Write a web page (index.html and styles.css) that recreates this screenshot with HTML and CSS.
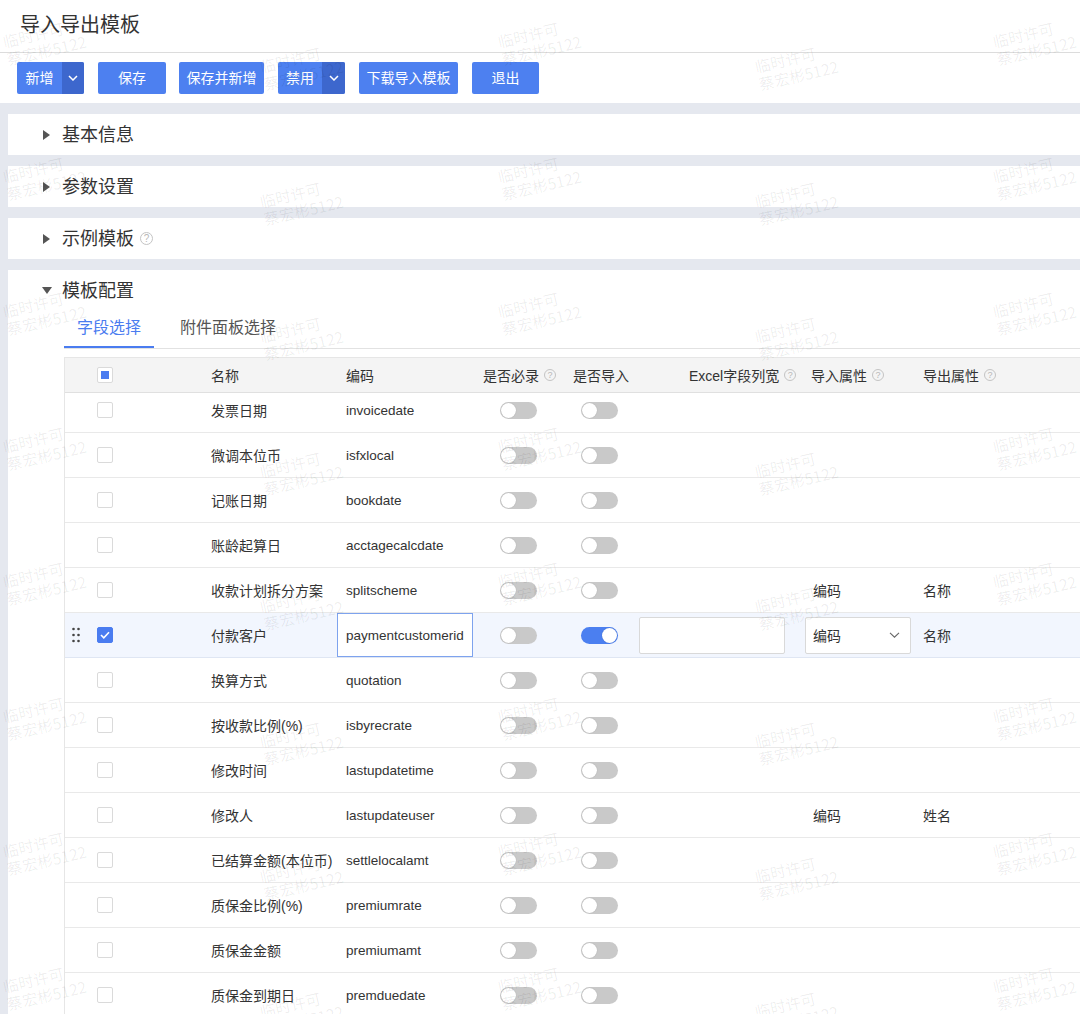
FILE: index.html
```html
<!DOCTYPE html>
<html lang="zh-CN">
<head>
<meta charset="utf-8">
<title>导入导出模板</title>
<link rel="stylesheet" href="styles.css">
</head>
<body>
<div class="page">
  <header class="titlebar"><h1>导入导出模板</h1></header>
  <div class="toolbar">
    <div class="split w45"><span class="main">新增</span><span class="drop"><svg width="10" height="6" viewBox="0 0 10 6"><path d="M1 1l4 4 4-4" fill="none" stroke="#fff" stroke-width="1.5"/></svg></span></div>
    <button class="btn w68">保存</button>
    <button class="btn w85">保存并新增</button>
    <div class="split w44"><span class="main">禁用</span><span class="drop"><svg width="10" height="6" viewBox="0 0 10 6"><path d="M1 1l4 4 4-4" fill="none" stroke="#fff" stroke-width="1.5"/></svg></span></div>
    <button class="btn w99">下载导入模板</button>
    <button class="btn w67">退出</button>
  </div>

  <main class="content">
    <section class="panel"><div class="panel-head"><i class="caret-r"></i>基本信息</div></section>
    <section class="panel"><div class="panel-head"><i class="caret-r"></i>参数设置</div></section>
    <section class="panel"><div class="panel-head"><i class="caret-r"></i>示例模板<span class="help big">?</span></div></section>
    <section class="panel open">
      <div class="panel-head"><i class="caret-d"></i>模板配置</div>
      <div class="tabs">
        <div class="tab active">字段选择</div>
        <div class="tab">附件面板选择</div>
      </div>
      <div class="grid">
        <div class="row head">
          <div class="c0"></div>
          <div class="c1"><span class="cb ind"></span></div>
          <div class="c2">名称</div>
          <div class="c3">编码</div>
          <div class="c4 hp">是否必录<span class="help">?</span></div>
          <div class="c5 hp">是否导入</div>
          <div class="c6 hx">Excel字段列宽<span class="help">?</span></div>
          <div class="c7 hp">导入属性<span class="help">?</span></div>
          <div class="c8">导出属性<span class="help">?</span></div>
        </div>
        <div class="body">
          <div class="rows">
            <div class="row"><div class="c0"></div><div class="c1"><span class="cb"></span></div><div class="c2">发票日期</div><div class="c3 code">invoicedate</div><div class="c4"><span class="sw"></span></div><div class="c5"><span class="sw"></span></div><div class="c6"></div><div class="c7"></div><div class="c8"></div></div>
            <div class="row"><div class="c0"></div><div class="c1"><span class="cb"></span></div><div class="c2">微调本位币</div><div class="c3 code">isfxlocal</div><div class="c4"><span class="sw"></span></div><div class="c5"><span class="sw"></span></div><div class="c6"></div><div class="c7"></div><div class="c8"></div></div>
            <div class="row"><div class="c0"></div><div class="c1"><span class="cb"></span></div><div class="c2">记账日期</div><div class="c3 code">bookdate</div><div class="c4"><span class="sw"></span></div><div class="c5"><span class="sw"></span></div><div class="c6"></div><div class="c7"></div><div class="c8"></div></div>
            <div class="row"><div class="c0"></div><div class="c1"><span class="cb"></span></div><div class="c2">账龄起算日</div><div class="c3 code">acctagecalcdate</div><div class="c4"><span class="sw"></span></div><div class="c5"><span class="sw"></span></div><div class="c6"></div><div class="c7"></div><div class="c8"></div></div>
            <div class="row"><div class="c0"></div><div class="c1"><span class="cb"></span></div><div class="c2">收款计划拆分方案</div><div class="c3 code">splitscheme</div><div class="c4"><span class="sw"></span></div><div class="c5"><span class="sw"></span></div><div class="c6"></div><div class="c7 txt">编码</div><div class="c8">名称</div></div>
            <div class="row sel">
              <div class="c0"><svg width="8" height="16" viewBox="0 0 8 16"><circle cx="1.5" cy="2" r="1.3" fill="#444"/><circle cx="6.5" cy="2" r="1.3" fill="#444"/><circle cx="1.5" cy="8" r="1.3" fill="#444"/><circle cx="6.5" cy="8" r="1.3" fill="#444"/><circle cx="1.5" cy="14" r="1.3" fill="#444"/><circle cx="6.5" cy="14" r="1.3" fill="#444"/></svg></div>
              <div class="c1"><span class="cb on"><svg width="10" height="8" viewBox="0 0 10 8"><path d="M1 4l2.8 2.8L9 1.3" fill="none" stroke="#fff" stroke-width="1.6"/></svg></span></div>
              <div class="c2">付款客户</div>
              <div class="c3 code edit">paymentcustomerid</div>
              <div class="c4"><span class="sw"></span></div>
              <div class="c5"><span class="sw on"></span></div>
              <div class="c6"><span class="inp"></span></div>
              <div class="c7"><span class="sel-box">编码<svg width="11" height="6" viewBox="0 0 11 6"><path d="M1 0.8l4.5 4.4L10 0.8" fill="none" stroke="#666" stroke-width="1.1"/></svg></span></div>
              <div class="c8">名称</div>
            </div>
            <div class="row"><div class="c0"></div><div class="c1"><span class="cb"></span></div><div class="c2">换算方式</div><div class="c3 code">quotation</div><div class="c4"><span class="sw"></span></div><div class="c5"><span class="sw"></span></div><div class="c6"></div><div class="c7"></div><div class="c8"></div></div>
            <div class="row"><div class="c0"></div><div class="c1"><span class="cb"></span></div><div class="c2">按收款比例(%)</div><div class="c3 code">isbyrecrate</div><div class="c4"><span class="sw"></span></div><div class="c5"><span class="sw"></span></div><div class="c6"></div><div class="c7"></div><div class="c8"></div></div>
            <div class="row"><div class="c0"></div><div class="c1"><span class="cb"></span></div><div class="c2">修改时间</div><div class="c3 code">lastupdatetime</div><div class="c4"><span class="sw"></span></div><div class="c5"><span class="sw"></span></div><div class="c6"></div><div class="c7"></div><div class="c8"></div></div>
            <div class="row"><div class="c0"></div><div class="c1"><span class="cb"></span></div><div class="c2">修改人</div><div class="c3 code">lastupdateuser</div><div class="c4"><span class="sw"></span></div><div class="c5"><span class="sw"></span></div><div class="c6"></div><div class="c7 txt">编码</div><div class="c8">姓名</div></div>
            <div class="row"><div class="c0"></div><div class="c1"><span class="cb"></span></div><div class="c2">已结算金额(本位币)</div><div class="c3 code">settlelocalamt</div><div class="c4"><span class="sw"></span></div><div class="c5"><span class="sw"></span></div><div class="c6"></div><div class="c7"></div><div class="c8"></div></div>
            <div class="row"><div class="c0"></div><div class="c1"><span class="cb"></span></div><div class="c2">质保金比例(%)</div><div class="c3 code">premiumrate</div><div class="c4"><span class="sw"></span></div><div class="c5"><span class="sw"></span></div><div class="c6"></div><div class="c7"></div><div class="c8"></div></div>
            <div class="row"><div class="c0"></div><div class="c1"><span class="cb"></span></div><div class="c2">质保金金额</div><div class="c3 code">premiumamt</div><div class="c4"><span class="sw"></span></div><div class="c5"><span class="sw"></span></div><div class="c6"></div><div class="c7"></div><div class="c8"></div></div>
            <div class="row"><div class="c0"></div><div class="c1"><span class="cb"></span></div><div class="c2">质保金到期日</div><div class="c3 code">premduedate</div><div class="c4"><span class="sw"></span></div><div class="c5"><span class="sw"></span></div><div class="c6"></div><div class="c7"></div><div class="c8"></div></div>
          </div>
        </div>
      </div>
    </section>
  </main>

  <div class="wm wm-a">
    <div>临时许可<br>蔡宏彬5122</div><div>临时许可<br>蔡宏彬5122</div><div>临时许可<br>蔡宏彬5122</div>
    <div>临时许可<br>蔡宏彬5122</div><div>临时许可<br>蔡宏彬5122</div><div>临时许可<br>蔡宏彬5122</div>
    <div>临时许可<br>蔡宏彬5122</div><div>临时许可<br>蔡宏彬5122</div><div>临时许可<br>蔡宏彬5122</div>
    <div>临时许可<br>蔡宏彬5122</div><div>临时许可<br>蔡宏彬5122</div><div>临时许可<br>蔡宏彬5122</div>
    <div>临时许可<br>蔡宏彬5122</div><div>临时许可<br>蔡宏彬5122</div><div>临时许可<br>蔡宏彬5122</div>
    <div>临时许可<br>蔡宏彬5122</div><div>临时许可<br>蔡宏彬5122</div><div>临时许可<br>蔡宏彬5122</div>
    <div>临时许可<br>蔡宏彬5122</div><div>临时许可<br>蔡宏彬5122</div><div>临时许可<br>蔡宏彬5122</div>
    <div>临时许可<br>蔡宏彬5122</div><div>临时许可<br>蔡宏彬5122</div><div>临时许可<br>蔡宏彬5122</div>
  </div>
  <div class="wm wm-b">
    <div>临时许可<br>蔡宏彬5122</div><div>临时许可<br>蔡宏彬5122</div>
    <div>临时许可<br>蔡宏彬5122</div><div>临时许可<br>蔡宏彬5122</div>
    <div>临时许可<br>蔡宏彬5122</div><div>临时许可<br>蔡宏彬5122</div>
    <div>临时许可<br>蔡宏彬5122</div><div>临时许可<br>蔡宏彬5122</div>
    <div>临时许可<br>蔡宏彬5122</div><div>临时许可<br>蔡宏彬5122</div>
    <div>临时许可<br>蔡宏彬5122</div><div>临时许可<br>蔡宏彬5122</div>
    <div>临时许可<br>蔡宏彬5122</div><div>临时许可<br>蔡宏彬5122</div>
    <div>临时许可<br>蔡宏彬5122</div><div>临时许可<br>蔡宏彬5122</div>
  </div>
</div>
</body>
</html>
```

FILE: styles.css
```css
* { box-sizing: border-box; }
html, body { margin: 0; padding: 0; height: 100%; overflow: hidden; }
body {
  font-family: "Liberation Sans", "Noto Sans CJK SC", sans-serif;
  color: #333;
  background: #fff;
}
.page { position: relative; height: 1014px; overflow: hidden; display: flex; flex-direction: column; }

.titlebar { flex-shrink: 0; height: 53px; border-bottom: 1px solid #dcdcdc; padding-left: 20px; display: flex; align-items: center; }
.titlebar h1 { margin: 0; font-size: 20px; font-weight: normal; line-height: 26px; color: #333; padding-bottom: 2px; }

.toolbar { flex-shrink: 0; height: 50px; display: flex; gap: 14px; padding: 9px 0 0 17px; }
.btn, .split {
  flex-shrink: 0;
  height: 32px; border: none; border-radius: 2px; background: #4d80f0; color: #fff;
  font-family: inherit; font-size: 14px; padding: 0; display: flex; align-items: center; justify-content: center;
  line-height: 32px;
}
.split { overflow: hidden; justify-content: flex-start; }
.split .main { display: flex; justify-content: center; align-items: center; height: 100%; }
.split .drop { width: 22px; height: 100%; background: #3d67cd; display: flex; align-items: center; justify-content: center; }
.w45 .main { width: 45px; }
.w44 .main { width: 44px; }
.w44 .drop { width: 23px; }
.w68 { width: 68px; }
.w85 { width: 85px; margin-left: -1px; }
.w99 { width: 99px; }
.w67 { width: 67px; }

.content { flex: 1 1 auto; min-height: 0; background: #e5e8ef; padding: 11px 0 0 8px; display: flex; flex-direction: column; gap: 11px; overflow: hidden; }
.panel { background: #fff; flex-shrink: 0; }
.panel-head { height: 41px; display: flex; align-items: center; padding-left: 35px; font-size: 18px; color: #333; line-height: 24px; }
.caret-r { width: 0; height: 0; border-top: 5px solid transparent; border-bottom: 5px solid transparent; border-left: 7px solid #555; margin-right: 12px; }
.caret-d { width: 0; height: 0; border-left: 5px solid transparent; border-right: 5px solid transparent; border-top: 7px solid #555; margin-left: -1px; margin-right: 10px; }
.panel.open { flex: 1 0 auto; }

.help {
  display: inline-flex; width: 12px; height: 12px; border: 1px solid #c4c4c4; border-radius: 50%;
  color: #b8b8b8; font-size: 9px; line-height: 10px; align-items: center; justify-content: center; margin-left: 5px;
  font-family: "Liberation Sans", sans-serif;
}
.help.big { width: 13px; height: 13px; font-size: 10px; margin-left: 6px; }

.tabs { margin-left: 56px; height: 38px; border-bottom: 1px solid #e2e2e2; display: flex; gap: 13px; }
.tab { padding: 0 13px; font-size: 16px; line-height: 22px; color: #555; display: flex; align-items: center; height: 37px; padding-bottom: 3px; }
.tab.active { color: #4a7cf0; border-bottom: 2px solid #4a7cf0; height: 37px; padding-bottom: 1px; }

.grid { margin: 8px 0 0 56px; border-left: 1px solid #e6e6e6; }
.row { display: flex; height: 45px; border-bottom: 1px solid #e9e9e9; font-size: 14px; align-items: center; }
.row > div { height: 100%; display: flex; align-items: center; flex-shrink: 0; white-space: nowrap; }
.row.head { height: 36px; background: #f4f4f4; border-top: 1px solid #e6e6e6; border-bottom: 1px solid #e0e0e0; color: #333; }
.body { height: 660px; overflow: hidden; }
.rows { margin-top: -5px; }

.c0 { width: 23px; padding-left: 7px; }
.c1 { width: 112px; padding-left: 9px; }
.c2 { width: 137px; padding-left: 11px; }
.c3 { width: 136px; padding-left: 9px; }
.c4 { width: 90px; padding-left: 27px; }
.c5 { width: 68px; padding-left: 18px; }
.c6 { width: 166px; padding-left: 8px; }
.c7 { width: 118px; padding-left: 8px; }
.c8 { flex: 1; padding-left: 8px; }
.head .c4, .head .c5 { padding-left: 10px; }
.head .c6 { padding-left: 58px; }
.head .c7 { padding-left: 14px; }
.c7.txt { padding-left: 16px; }

.code { font-size: 13.5px; color: #333; }
.row.sel { background: #f2f6fe; border-bottom-color: #dfe6f3; }
.code.edit { border: 1px solid #7ea3ee; background: #fff; padding-left: 8px; }

.cb { width: 16px; height: 16px; border: 1px solid #dadada; border-radius: 2px; background: #fff; display: flex; align-items: center; justify-content: center; }
.cb.ind::after { content: ""; width: 8px; height: 8px; background: #4a7cf0; }
.cb.on { background: #4a7cf0; border-color: #4a7cf0; }

.sw { width: 37px; height: 17px; border-radius: 9px; background: #c9c9c9; position: relative; display: block; }
.sw::after { content: ""; position: absolute; left: 1px; top: 1px; width: 15px; height: 15px; border-radius: 50%; background: #fff; box-shadow: 0 0 1px rgba(0,0,0,0.25); }
.sw.on { background: #4b7ff0; }
.sw.on::after { left: 21px; }

.inp { width: 146px; height: 37px; border: 1px solid #d9d9d9; border-radius: 2px; background: #fff; display: block; }
.sel-box { width: 106px; height: 37px; border: 1px solid #d9d9d9; border-radius: 2px; background: #fff; display: flex; align-items: center; justify-content: space-between; padding: 0 10px 0 7px; font-size: 14px; }

.wm { position: absolute; display: grid; grid-auto-rows: 135px; pointer-events: none; z-index: 10; }
.wm-a { left: 5px; top: 32px; grid-template-columns: repeat(3, 495px); }
.wm-b { left: 262px; top: 57px; grid-template-columns: repeat(2, 495px); }
.wm > div {
  font-size: 15.5px; line-height: 18px; color: rgba(0, 0, 0, 0.07);
  transform: rotate(-13deg); transform-origin: left center; white-space: nowrap;
  font-family: "Noto Sans CJK SC", sans-serif; align-self: start;
}
```
